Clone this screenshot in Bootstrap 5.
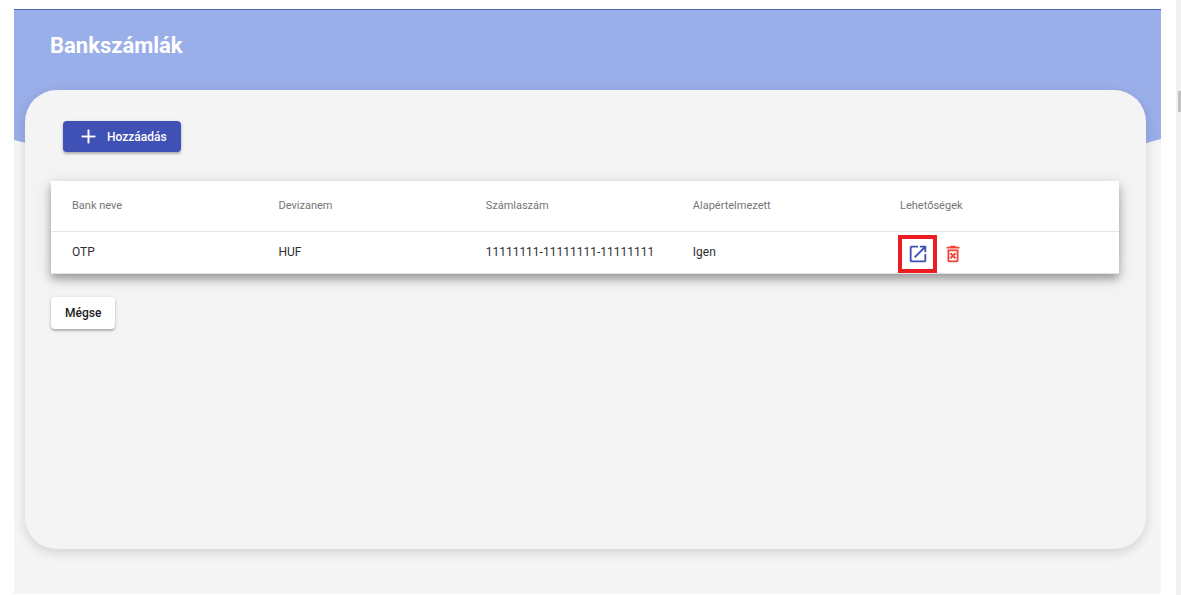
<!DOCTYPE html>
<html lang="hu">
<head>
<meta charset="utf-8">
<meta name="viewport" content="width=device-width, initial-scale=1">
<title>Bankszámlák</title>
<link href="https://cdn.jsdelivr.net/npm/bootstrap@5.3.0/dist/css/bootstrap.min.css" rel="stylesheet">
<style>
  body { font-family: Roboto, sans-serif; font-size: 12px; color: #212121; background: #fff; }
  .stage { background: #f5f5f5; margin: 9px 15px 1px 14px; }
  .page-head {
    height: 141px; padding: 22px 36px; background: #9aaee9; border-top: 1px solid #4c66b8;
    clip-path: polygon(0 0, 100% 0, 100% 130px, calc(100% - 40px) 141px, 40px 141px, 0 131px);
  }
  .page-head h1 { font-size: 22px; line-height: 28px; font-weight: 700; color: #fff; }
  .panel {
    margin: -60px 15px 45px 11px; padding: 31px 27px 26px 26px;
    border-radius: 32px; background: #f4f4f4; box-shadow: 0 4px 12px rgba(0, 0, 0, .14);
  }
  .btn-mat {
    height: 32px; font-size: 12px; font-weight: 500; line-height: 20px; border: 0; border-radius: 4px;
    box-shadow: 0 2px 2px rgba(0, 0, 0, .2), 0 1px 4px rgba(0, 0, 0, .14);
  }
  .btn-add, .btn-add:hover { background: #3f51b5; color: #fff; }
  .btn-add { height: 31px; padding: 0 14px 0 16px; gap: 9px; margin-left: 12px; }
  .btn-back, .btn-back:hover { background: #fff; color: #212121; }
  .btn-back { padding: 1px 14px 0; margin-top: 23px; }
  .sheet { margin-top: 29px; background: #fff; box-shadow: 0 5px 8px rgba(0, 0, 0, .3), 0 4px 18px rgba(0, 0, 0, .12); }
  .accounts { --bs-table-bg: #fff; table-layout: fixed; border-bottom: 1px solid #e2e2e2; }
  .accounts th, .accounts td { padding: 0; vertical-align: middle; border: 0; }
  .accounts th:first-child, .accounts td:first-child { padding-left: 21px; }
  .accounts th { height: 50px; font-size: 11px; font-weight: 400; color: #757575; border-bottom: 1px solid #e6e6e6; }
  .accounts td { height: 42px; color: #303030; }
  .accounts td:last-child { vertical-align: bottom; }
  .col-first { width: 21.3%; }
  .col-mid { width: 19.4%; }
  .icon-btn { padding: 0; border: 0; background: none; display: flex; align-items: center; justify-content: center; }
  .icon-open { width: 39px; height: 38px; border: 4px solid #ed1c24; color: #3f51b5; margin-left: -2px; }
  .icon-del { color: #f44336; margin-left: 5px; }
  .rail { flex: 0 0 5px; background: #f0f0f0; padding: 91px 0 0 2px; }
  .thumb { height: 21px; background: #c1c1c1; }
</style>
</head>
<body>
<div class="d-flex min-vh-100">
  <main class="stage flex-grow-1 d-flex flex-column">
    <header class="page-head"><h1 class="m-0">Bankszámlák</h1></header>
    <section class="panel position-relative flex-grow-1">
      <button type="button" class="btn btn-mat btn-add d-flex align-items-center">
        <svg width="19" height="19" viewBox="0 0 24 24" fill="currentColor" stroke="currentColor" stroke-width=".4" aria-hidden="true"><path d="M20.5 13H13v7.500h-2V13H3.500v-2H11V3.500h2V11h7.500z"/></svg>
        Hozzáadás
      </button>
      <div class="sheet">
        <table class="table accounts mb-0">
          <colgroup><col class="col-first"><col class="col-mid"><col class="col-mid"><col class="col-mid"><col></colgroup>
          <thead>
            <tr><th scope="col">Bank neve</th><th scope="col">Devizanem</th><th scope="col">Számlaszám</th><th scope="col">Alapértelmezett</th><th scope="col">Lehetőségek</th></tr>
          </thead>
          <tbody>
            <tr>
              <td>OTP</td><td>HUF</td><td>11111111-11111111-11111111</td><td>Igen</td>
              <td>
                <div class="d-flex align-items-center">
                  <button type="button" class="icon-btn icon-open" aria-label="Megnyitás">
                    <svg width="22" height="22" viewBox="0 0 24 24" fill="currentColor"><path d="M19 19H5V5h7V3H5c-1.110 0-2 .9-2 2v14c0 1.100.890 2 2 2h14c1.100 0 2-.9 2-2v-7h-2v7zM14 3v2h3.590l-9.830 9.830 1.410 1.410L19 6.410V10h2V3h-7z"/></svg>
                  </button>
                  <button type="button" class="icon-btn icon-del" aria-label="Törlés">
                    <svg width="22" height="22" viewBox="0 0 24 24" fill="currentColor"><path d="M14.120 10.470L12 12.590l-2.130-2.120-1.410 1.410L10.590 14l-2.120 2.120 1.410 1.410L12 15.410l2.120 2.120 1.410-1.410L13.410 14l2.120-2.120zM15.500 4l-1-1h-5l-1 1H5v2h14V4zM6 19c0 1.100.9 2 2 2h8c1.100 0 2-.9 2-2V7H6v12zM8 9h8v10H8V9z"/></svg>
                  </button>
                </div>
              </td>
            </tr>
          </tbody>
        </table>
      </div>
      <button type="button" class="btn btn-mat btn-back">Mégse</button>
    </section>
  </main>
  <div class="rail" aria-hidden="true"><div class="thumb"></div></div>
</div>
<script src="https://cdn.jsdelivr.net/npm/bootstrap@5.3.0/dist/js/bootstrap.bundle.min.js"></script>
</body>
</html>
